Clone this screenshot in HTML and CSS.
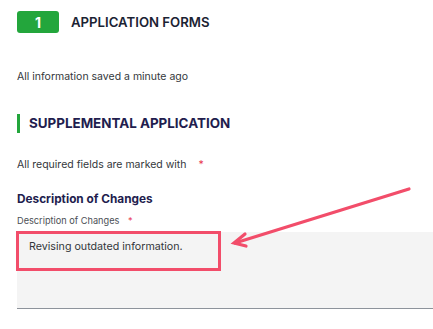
FILE: index.html
```html
<!doctype html>
<html lang="en">
<head>
	<meta charset="utf-8">
	<title>Application Forms</title>
	<link rel="stylesheet" href="styles.css">
</head>
<body>
	<section id="page">
		<div class="stepHeader">
			<span class="stepBadge">1</span>
			<h2>APPLICATION FORMS</h2>
		</div>
		<p class="savedNote">All information saved a minute ago</p>

		<h3 class="sectionTitle">SUPPLEMENTAL APPLICATION</h3>
		<p class="requiredNote">All required fields are marked with <span class="req">*</span></p>

		<h4 class="fieldTitle">Description of Changes</h4>
		<label class="fieldLabel" for="changes">Description of Changes <span class="req">*</span></label>
		<div class="textBox" id="changes">Revising outdated information.</div>

		<!-- annotation drawn over the form -->
		<div class="highlight"></div>
		<svg class="arrow" width="433" height="329" viewBox="0 0 433 329">
			<g stroke="#f24d6a" stroke-width="3.2" stroke-linecap="round" fill="none">
				<line x1="409" y1="189" x2="235" y2="243"/>
				<polyline points="245,234 234,243 246,246"/>
			</g>
		</svg>
	</section>
</body>
</html>
```
FILE: styles.css
```css
* {
	margin: 0;
	padding: 0;
	box-sizing: border-box;
}

body {
	font-family: Inter, "Noto Sans", sans-serif;
	background: #fff;
	color: #2f3337;
	overflow: hidden;
}

#page {
	position: relative;
	padding: 11px 0 0 17px;
	height: 329px;
}

.stepHeader {
	display: flex;
	align-items: center;
	gap: 12px;
}
.stepBadge {
	width: 42px;
	height: 22px;
	border-radius: 3px;
	background-color: #23a63c;
	color: #fff;
	font-weight: 700;
	font-size: 14px;
	display: flex;
	align-items: center;
	justify-content: center;
}
.stepHeader h2 {
	font-size: 13.2px;
	font-weight: 600;
	color: #1b2333;
}

.savedNote {
	margin-top: 37px;
	font-size: 10.5px;
	line-height: 14px;
	color: #33373b;
}

.sectionTitle {
	margin-top: 30px;
	height: 19px;
	border-left: 3px solid #23a63c;
	padding-left: 9px;
	font-size: 13.4px;
	line-height: 19px;
	font-weight: 700;
	color: #221d4e;
}

.requiredNote {
	margin-top: 25px;
	font-size: 10.5px;
	line-height: 14px;
	color: #33373b;
}
.req {
	color: #e8344e;
	margin-left: 9px;
}

.fieldTitle {
	margin-top: 19px;
	font-size: 11.8px;
	line-height: 16px;
	font-weight: 700;
	color: #221d4e;
}
.fieldLabel {
	display: block;
	margin-top: 8px;
	font-size: 9.2px;
	line-height: 12px;
	color: #4b4f55;
}
.fieldLabel .req {
	margin-left: 6px;
}

.textBox {
	margin-top: 5px;
	height: 77px;
	background-color: #f4f4f4;
	border-bottom: 1px solid #8d939b;
	padding: 8px 0 0 12px;
	font-size: 10.7px;
	line-height: 14px;
	color: #33373b;
}

.highlight {
	position: absolute;
	left: 16px;
	top: 231px;
	width: 205px;
	height: 40px;
	border: 3px solid #f24d6a;
}
.arrow {
	position: absolute;
	left: 0;
	top: 0;
}
```
